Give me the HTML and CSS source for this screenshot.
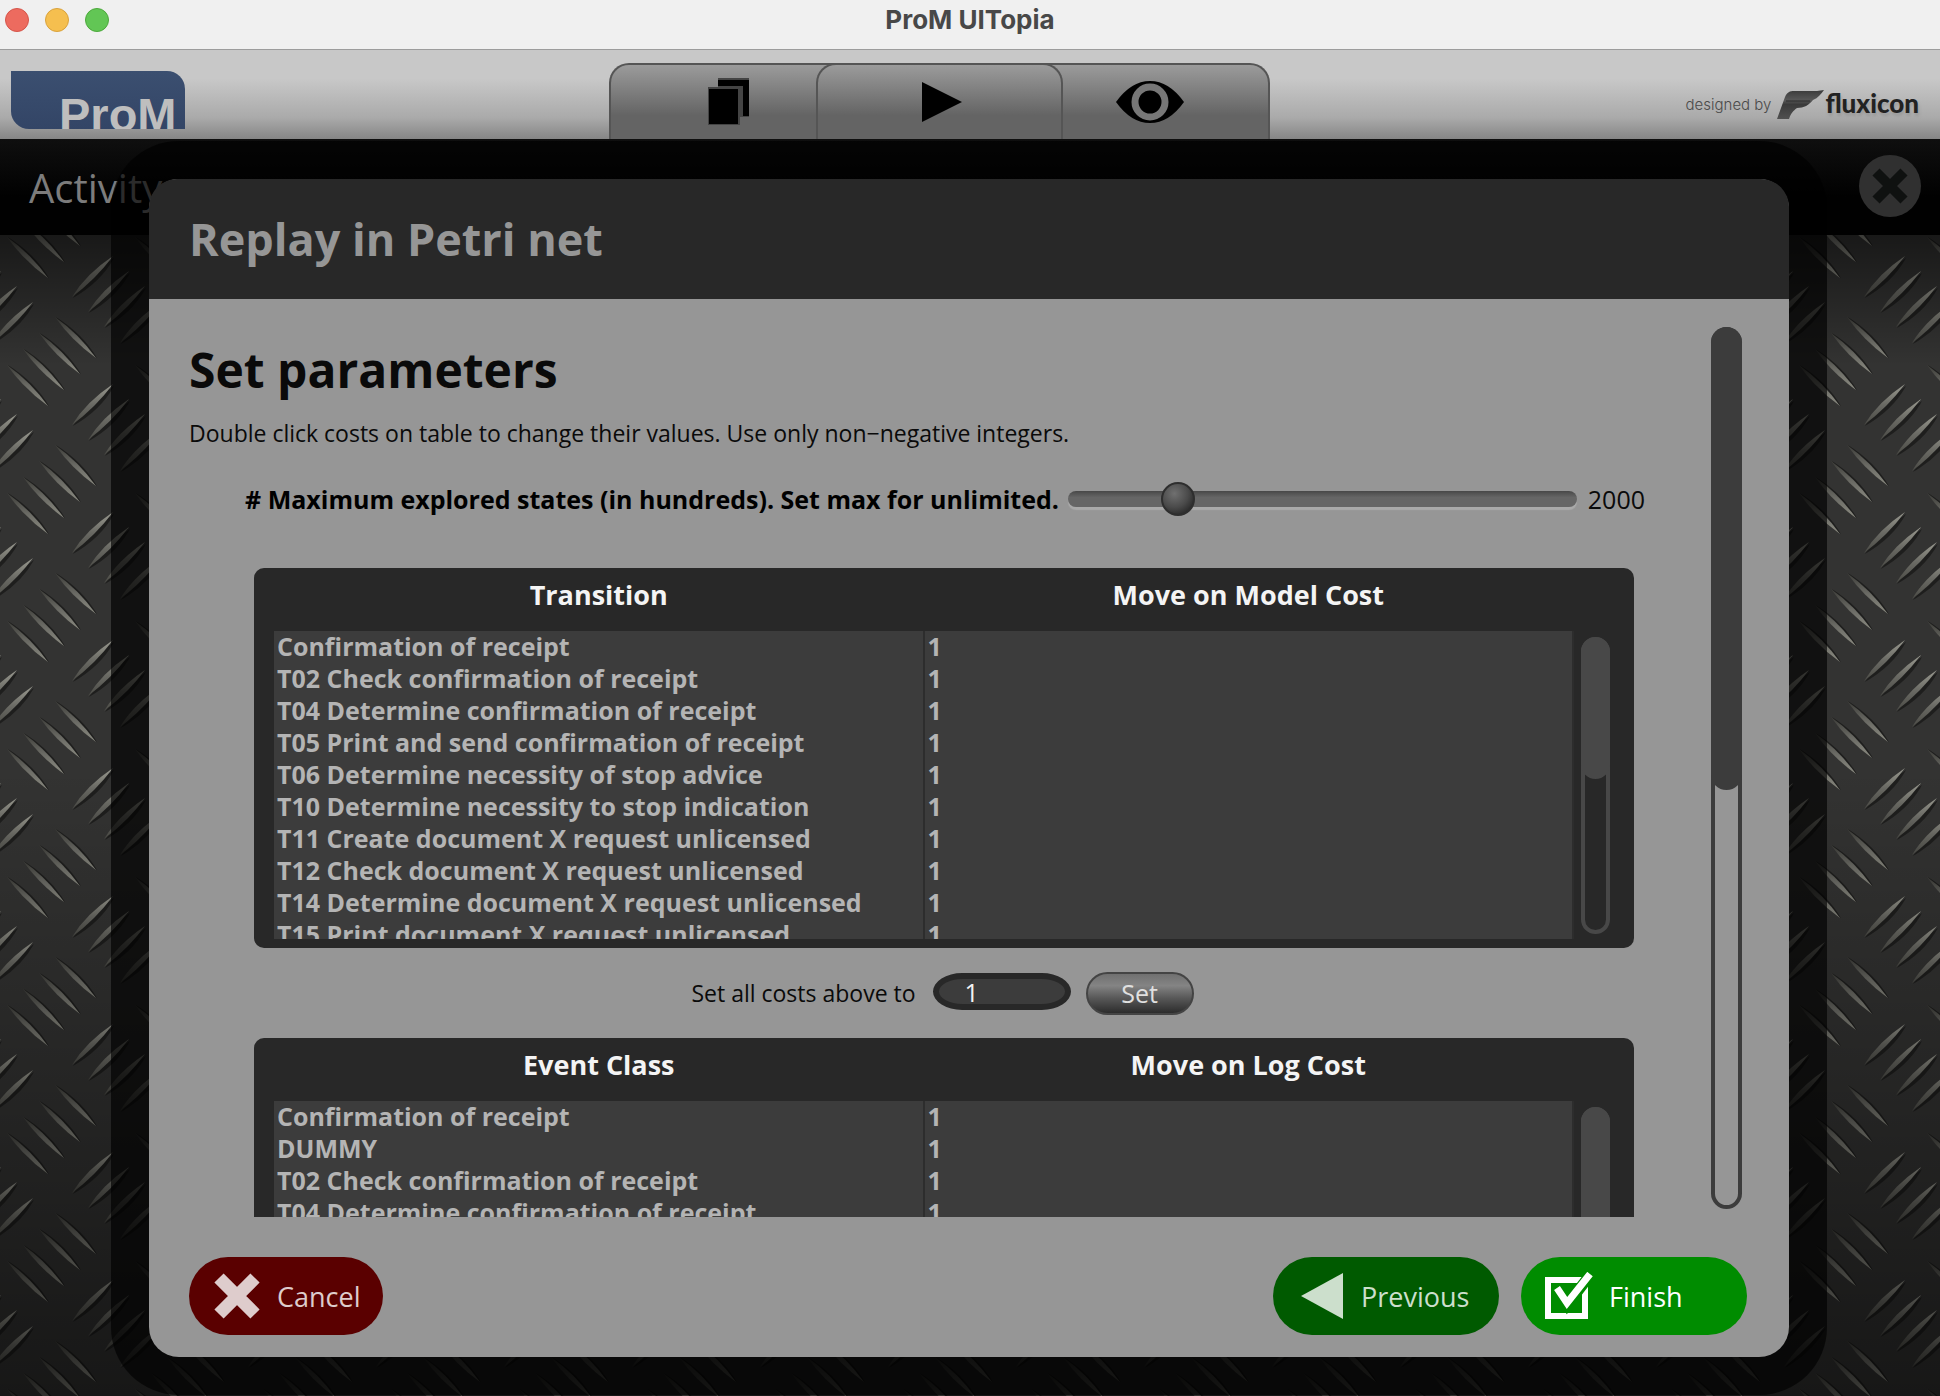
FILE: index.html
```html
<!DOCTYPE html>
<html lang="en">
<head>
<meta charset="utf-8">
<title>ProM UITopia</title>
<link rel="stylesheet" href="styles.css">
</head>
<body>
<div class="window">
  <header class="titlebar">
    <div class="lights"><span class="light red"></span><span class="light amber"></span><span class="light green"></span></div>
    <div class="window-title">ProM UITopia</div>
  </header>

  <div class="toolbar">
    <div class="brand">ProM</div>
    <nav class="tabs">
      <button class="tab tab-left" aria-label="Workspace">
        <svg width="42" height="50" viewBox="0 0 42 50"><path d="M10 1h31v39H10z" fill="#444"/><path d="M10 3h31v36h-6V9H10z" fill="#000"/><path d="M0 10h32v38H0z" fill="#444"/><path d="M1 12h29v35H1z" fill="#000"/></svg>
      </button>
      <button class="tab tab-mid" aria-label="Actions">
        <svg width="42" height="42" viewBox="0 0 42 42"><path d="M1 1l40 20L1 41z" fill="#000"/></svg>
      </button>
      <button class="tab tab-right" aria-label="Views">
        <svg width="70" height="44" viewBox="0 0 70 44"><path d="M1 22Q16 1 35 1t34 21Q54 43 35 43T1 22z" fill="#000"/><circle cx="35" cy="22" r="15" fill="none" stroke="#777" stroke-width="7"/></svg>
      </button>
    </nav>
    <div class="credits">
      <span class="by">designed by</span>
      <svg width="50" height="32" viewBox="0 0 50 32"><defs><linearGradient id="wing" x1="0" y1="0" x2="0" y2="1"><stop offset="0" stop-color="#3a3a3a"/><stop offset=".35" stop-color="#585858"/><stop offset=".5" stop-color="#3a3a3a"/><stop offset="1" stop-color="#505050"/></linearGradient></defs><path d="M49 1c-3 4-6 8-11 10-4 5-9 8-16 8-4 3-6 5-8 11H2L10 8c2-5 5-6 9-6h23z" fill="url(#wing)"/><path d="M11 12h24" stroke="#2c2c2c" stroke-width="1"/></svg>
      <span class="flux">fluxicon</span>
    </div>
  </div>

  <main class="stage">
    <svg class="plate" width="100%" height="100%" aria-hidden="true">
      <defs>
        <linearGradient id="ridge" x1="0" y1="0" x2="0" y2="1"><stop offset="0" stop-color="#3c3c38"/><stop offset=".5" stop-color="#6a6a64"/><stop offset="1" stop-color="#8c8c82"/></linearGradient>
        <linearGradient id="ridge2" x1="0" y1="0" x2="0" y2="1"><stop offset="0" stop-color="#9a9a90"/><stop offset=".5" stop-color="#6a6a64"/><stop offset="1" stop-color="#4a4a45"/></linearGradient>
        <linearGradient id="fall" x1="0" y1="0" x2="0" y2="1"><stop offset="0" stop-opacity=".75"/><stop offset=".06" stop-opacity=".6"/><stop offset=".18" stop-opacity="0"/><stop offset=".5" stop-opacity="0"/><stop offset="1" stop-opacity=".55"/></linearGradient>
        <g id="down"><path d="M1 0Q28 17 42 41Q18 26 1 0z" fill="#1e1e1d"/><path d="M0 0Q24 17 41 41Q17 24 0 0z" fill="url(#ridge)"/></g>
        <g id="up"><path d="M1 42Q14 21 42 2Q29 26 1 42z" fill="#1e1e1d"/><path d="M0 41Q14 18 41 0Q24 23 0 41z" fill="url(#ridge2)"/></g>
        <g id="cell">
          <use href="#down" x="55" y="61"/><use href="#down" x="39" y="77"/><use href="#down" x="23" y="93"/><use href="#down" x="7" y="109"/>
          <use href="#up" x="72" y="0"/><use href="#up" x="88" y="15"/><use href="#up" x="104" y="30"/><use href="#up" x="120" y="46"/>
        </g>
        <pattern id="tread" width="128" height="128" y="117" patternUnits="userSpaceOnUse">
          <rect width="128" height="128" fill="#333332"/>
          <use href="#cell"/><use href="#cell" x="-128"/><use href="#cell" y="-128"/><use href="#cell" x="-128" y="-128"/>
        </pattern>
      </defs>
      <rect width="100%" height="100%" fill="url(#tread)"/>
      <rect width="100%" height="100%" fill="url(#fall)"/>
    </svg>
    <div class="activity">
      <h2 class="activity-title">Activity</h2>
      <button class="close" aria-label="Close">
        <svg width="36" height="36" viewBox="0 0 36 36"><path d="M4 4l28 28M32 4L4 32" stroke="#0f1110" stroke-width="10"/></svg>
      </button>
    </div>

    <section class="dialog">
      <h1 class="dialog-title">Replay in Petri net</h1>
      <div class="dialog-body">
        <div class="content">
          <h2 class="heading">Set parameters</h2>
          <p class="hint">Double click costs on table to change their values. Use only non−negative integers.</p>
          <div class="limit">
            <label for="states"># Maximum explored states (in hundreds). Set max for unlimited.</label>
            <input id="states" class="slider" type="range" min="0" max="10200" value="2000">
            <output for="states">2000</output>
          </div>
          <div class="panel">
            <div class="table-view">
              <table>
                <thead><tr><th>Transition</th><th>Move on Model Cost</th></tr></thead>
                <tbody>
                  <tr><td>Confirmation of receipt</td><td>1</td></tr>
                  <tr><td>T02 Check confirmation of receipt</td><td>1</td></tr>
                  <tr><td>T04 Determine confirmation of receipt</td><td>1</td></tr>
                  <tr><td>T05 Print and send confirmation of receipt</td><td>1</td></tr>
                  <tr><td>T06 Determine necessity of stop advice</td><td>1</td></tr>
                  <tr><td>T10 Determine necessity to stop indication</td><td>1</td></tr>
                  <tr><td>T11 Create document X request unlicensed</td><td>1</td></tr>
                  <tr><td>T12 Check document X request unlicensed</td><td>1</td></tr>
                  <tr><td>T14 Determine document X request unlicensed</td><td>1</td></tr>
                  <tr><td>T15 Print document X request unlicensed</td><td>1</td></tr>
                </tbody>
              </table>
            </div>
            <div class="scrollbar inner"><div class="thumb"></div></div>
          </div>
          <div class="set-all">
            <label for="cost">Set all costs above to</label>
            <input id="cost" class="cost" type="text" value="1">
            <button class="set">Set</button>
          </div>
          <div class="panel">
            <div class="table-view">
              <table>
                <thead><tr><th>Event Class</th><th>Move on Log Cost</th></tr></thead>
                <tbody>
                  <tr><td>Confirmation of receipt</td><td>1</td></tr>
                  <tr><td>DUMMY</td><td>1</td></tr>
                  <tr><td>T02 Check confirmation of receipt</td><td>1</td></tr>
                  <tr><td>T04 Determine confirmation of receipt</td><td>1</td></tr>
                </tbody>
              </table>
            </div>
            <div class="scrollbar inner"><div class="thumb"></div></div>
          </div>
        </div>
        <div class="scrollbar outer"><div class="thumb"></div></div>
      </div>
      <footer class="actions">
        <button class="action cancel">
          <svg width="48" height="48" viewBox="0 0 48 48"><path d="M6 6l36 36M42 6L6 42" stroke="#decccc" stroke-width="13"/></svg>
          Cancel
        </button>
        <button class="action previous">
          <svg width="48" height="48" viewBox="0 0 48 48"><path d="M4 24L46 1v46z" fill="#ccdfcc"/></svg>
          Previous
        </button>
        <button class="action finish">
          <svg width="48" height="48" viewBox="0 0 48 48"><path d="M3 8h37v36H3z" fill="none" stroke="#fff" stroke-width="6"/><path d="M12 19l10 14L45 3" fill="none" stroke="#008c00" stroke-width="11"/><path d="M12 16l10 15L45 2" fill="none" stroke="#fff" stroke-width="7"/></svg>
          Finish
        </button>
      </footer>
    </section>
  </main>
</div>
</body>
</html>
```
FILE: styles.css
```css
* { box-sizing: border-box; }
body { margin: 0; font-family: "Open Sans", "Noto Sans", sans-serif; }
h1, h2, p { margin: 0; }
button, input { font-family: inherit; margin: 0; }
svg { display: block; flex: none; }

.window { display: flex; flex-direction: column; height: 100vh; min-height: 900px; overflow: hidden; background: #000; }

.titlebar { display: grid; grid-template-columns: 1fr auto 1fr; align-items: center; height: 50px; padding: 0 5px 9px; background: #f0f0f0; border-bottom: 1px solid #9c9c9c; }
.lights { display: flex; gap: 16px; }
.light { width: 24px; height: 24px; border-radius: 50%; border: 1px solid; }
.red { background: #ed6b5f; border-color: #d5554a; }
.amber { background: #f5bf4f; border-color: #d9a23c; }
.green { background: #62c655; border-color: #4ca93c; }
.window-title { font: 700 26px/30px Inter, sans-serif; color: #484848; }

.toolbar { display: grid; grid-template-columns: 598fr 661px 649fr; align-items: end; height: 89px; padding: 0 21px 0 11px; background: linear-gradient(#c8c8c8 32%, #aaa 76%, #868686); }
.brand { width: 174px; height: 58px; margin-bottom: 10px; padding: 18px 0 0 48px; overflow: hidden; border-radius: 0 18px 0 18px; background: linear-gradient(#3b4f70, #334566); color: #bebebe; font: 700 47px/52px "Liberation Sans", Arial, sans-serif; }
.tabs { display: flex; height: 76px; }
.tab { display: flex; align-items: center; justify-content: center; flex: 210; padding: 0; border: 2px solid #555; border-bottom: 0; background: linear-gradient(#9b9b9b, #646464 68%); }
.tab-left { border-radius: 20px 0 0 0; border-right: 0; margin-right: -20px; padding-left: 10px; flex-basis: 20px; }
.tab-mid { flex: 240; border-radius: 20px 20px 0 0; position: relative; padding-left: 5px; }
.tab-right { border-radius: 0 20px 0 0; border-left: 0; margin-left: -20px; padding-right: 10px; flex-basis: 20px; }
.credits { display: flex; align-items: center; justify-content: flex-end; height: 68px; }
.by { margin-right: 4px; font: 300 15px/24px Inter, sans-serif; color: #4a4a4a; }
.flux { padding-bottom: 4px; font: 900 26px/28px Lato, sans-serif; color: #222; text-shadow: 1px 3px 3px #8888; }

.stage { position: relative; flex: 1; min-height: 0; background: #222; }
.plate { position: absolute; inset: 0; }
.activity { position: relative; display: flex; align-items: center; justify-content: space-between; height: 96px; padding: 0 19px 2px 29px; background: linear-gradient(#0f0f0f, #010101 60%); }
.activity-title { padding-top: 3px; font-size: 40px; line-height: 48px; font-weight: 400; color: #7c7c7c; }
.close { display: flex; align-items: center; justify-content: center; width: 62px; height: 62px; padding: 0; border: 0; border-radius: 50%; background: #303030; }

.dialog { position: absolute; inset: 40px 151px 39px 149px; display: flex; flex-direction: column; border-radius: 30px; background: #969696; box-shadow: 0 0 0 38px #000000a6; }
.dialog-title { padding: 30px 40px; border-radius: 28px 28px 0 0; background: #282828; color: #969696; font-size: 45px; line-height: 60px; font-weight: 700; }
.dialog-body { display: flex; flex: 1; min-height: 0; padding: 0 47px 0 40px; }
.content { flex: 1; min-width: 0; overflow: hidden; padding-top: 39px; color: #0a0a0a; }
.heading { font-size: 48px; line-height: 64px; font-weight: 700; }
.hint { padding: 15px 0; font-size: 23px; line-height: 32px; }
.limit { display: flex; align-items: center; height: 34px; margin: 18px 66px 52px 56px; font-size: 25px; line-height: 34px; }
.limit label { font-weight: 700; color: #000; }
.slider { flex: 1; min-width: 0; height: 34px; margin: 0 11px 0 9px; appearance: none; background: none; }
.slider::-webkit-slider-runnable-track { height: 16px; border-radius: 8px; background: linear-gradient(#484848, #666 40%, #666); box-shadow: 0 3px 1px #aaa; }
.slider::-webkit-slider-thumb { appearance: none; width: 34px; height: 34px; margin-top: -9px; border: 2px solid #2e2e2e; border-radius: 50%; background: radial-gradient(circle at 38% 32%, #707070, #4a4a4a 50%, #161616); }

.panel { display: flex; gap: 7px; height: 380px; margin: 0 77px 0 65px; padding: 0 24px 9px 20px; border-radius: 10px; background: #282828; }
.table-view { flex: 1; overflow: hidden; }
table { width: 100%; table-layout: fixed; border-collapse: collapse; font-weight: 700; }
th { height: 63px; padding: 0 0 10px; font-size: 27px; line-height: 32px; color: #f4f4f4; }
td { height: 32px; padding: 0 3px 2px; font-size: 25px; line-height: 30px; white-space: nowrap; color: #b4b4b4; background: #3c3c3c; border-right: 2px solid #2d2d2d; }

.scrollbar { border: 4px solid #484848; border-radius: 16px; }
.scrollbar .thumb { margin: -4px; border-radius: 16px; background: #484848; }
.inner { width: 29px; margin: 69px 0 5px; }
.inner .thumb { height: 49%; }
.outer { width: 31px; margin: 28px 0 8px; border-color: #3c3c3c; }
.outer .thumb { height: 53%; background: #3c3c3c; }

.set-all { display: flex; align-items: center; justify-content: center; height: 90px; margin: 0 80px 0 65px; font-size: 23px; }
.cost { width: 138px; height: 37px; margin: 0 15px 3px 17px; padding: 0 26px; border: 6px solid #282828; border-radius: 30px / 19px; background: #3c3c3c; color: #f4f4f4; font-size: 25px; }
.set { width: 108px; height: 43px; padding: 0; border: 2px solid #444; border-radius: 22px; background: linear-gradient(#707070, #848484 30%, #5a5a5a 60%, #2c2c2c); color: #e0e0e0; font-size: 25px; line-height: 36px; }

.actions { display: flex; gap: 22px; padding: 40px 42px 22px 40px; }
.action { display: flex; align-items: center; gap: 16px; height: 78px; min-width: 226px; padding: 0 22px 0 24px; border: 0; border-radius: 39px; font-size: 27px; }
.cancel { min-width: 194px; margin-right: auto; background: #5a0000; color: #decccc; }
.previous { background: #005a00; color: #ccdfcc; }
.finish { background: #008c00; color: #fff; }
```
